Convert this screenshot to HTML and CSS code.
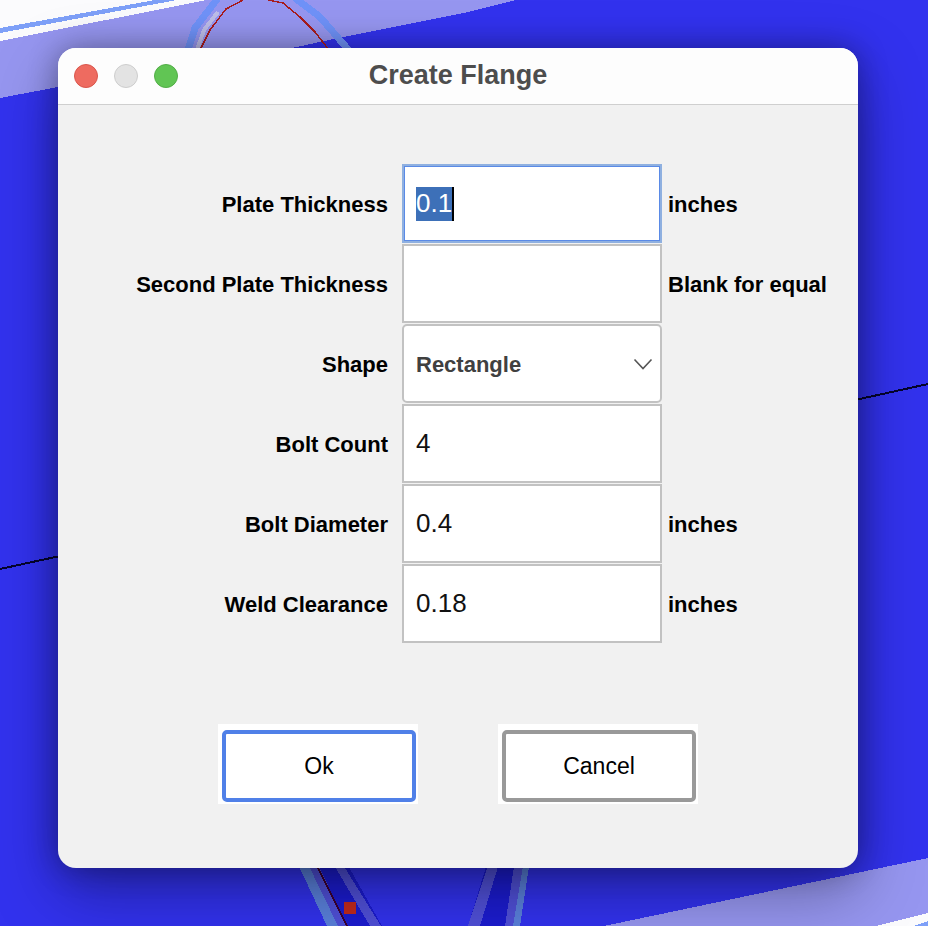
FILE: index.html
```html
<!DOCTYPE html>
<html lang="en">
<head>
<meta charset="utf-8">
<title>Create Flange</title>
<link rel="stylesheet" href="styles.css">
</head>
<body>
<svg class="scene" width="928" height="926" viewBox="0 0 928 926" aria-hidden="true">
  <rect class="s-base" width="928" height="926"/>
  <polygon class="s-lav" points="0,41 205,0 516,0 464,13 343,37 292,48 58,87 0,98"/>
  <polygon class="s-white" points="0,0 207,0 0,41"/>
  <polygon class="s-sky" points="0,28 155,0 177,0 0,33"/>
  <path class="s-ring" d="M188 50 L195 28 L218 -2"/>
  <path class="s-ring" d="M295 -2 L320 17 L352 54"/>
  <path class="s-pale" d="M197 50 L204 30 L218 12"/>
  <path class="s-red" d="M200 50 L210 30 L226 9 L243 0"/>
  <path class="s-red" d="M268 0 L283 3 L300 17 L315 32 L329 50"/>
  <polygon class="s-lav" points="604,926 928,858 928,926"/>
  <polygon class="s-white" points="876,926 928,913 928,926"/>
  <polygon class="s-sky" points="913,926 928,921 928,926"/>
  <polygon class="s-deep" points="310,860 345,860 382,926 346,926"/>
  <polygon class="s-deep" points="488,860 530,860 510,926 468,926"/>
  <polygon class="s-ringb" points="296,860 306,860 338,926 327,926"/>
  <polygon class="s-band" points="306,860 316,860 347,926 338,926"/>
  <polygon class="s-band" points="331,860 340,860 381,926 370,926"/>
  <polygon class="s-band" points="490,860 500,860 480,926 468,926"/>
  <polygon class="s-band" points="515,860 528,860 514,926 505,926"/>
  <polygon class="s-ringb" points="524,860 530,860 520,926 513,926"/>
  <path class="s-dark" d="M314 860 L347 926"/>
  <rect class="s-dot" x="344" y="902" width="12" height="12"/>
  <path class="s-line" d="M0 569 L60 556"/>
  <path class="s-line" d="M855 400 L928 384"/>
</svg>

<main class="dialog">
  <header class="titlebar">
    <div class="lights">
      <span class="light light-close"></span>
      <span class="light light-min"></span>
      <span class="light light-max"></span>
    </div>
    <h1 class="title">Create Flange</h1>
  </header>

  <div class="body">
    <div class="form">
      <div class="label">Plate Thickness</div>
      <div class="field field-focus"><span class="selection">0.1</span><span class="caret"></span></div>
      <div class="unit">inches</div>

      <div class="label">Second Plate Thickness</div>
      <div class="field"></div>
      <div class="unit">Blank for equal</div>

      <div class="label">Shape</div>
      <div class="field field-select">
        <span class="select-text">Rectangle</span>
        <svg class="chevron" width="20" height="12" viewBox="0 0 20 12"><path d="M1.5 1.5 L10 10.5 L18.5 1.5"/></svg>
      </div>
      <div class="unit"></div>

      <div class="label">Bolt Count</div>
      <div class="field">4</div>
      <div class="unit"></div>

      <div class="label">Bolt Diameter</div>
      <div class="field">0.4</div>
      <div class="unit">inches</div>

      <div class="label">Weld Clearance</div>
      <div class="field">0.18</div>
      <div class="unit">inches</div>
    </div>

    <div class="actions">
      <div class="tile"><button class="btn btn-primary" type="button">Ok</button></div>
      <div class="tile"><button class="btn" type="button">Cancel</button></div>
    </div>
  </div>
</main>
</body>
</html>
```

FILE: styles.css
```css
* { box-sizing: border-box; }

html, body {
  margin: 0;
  padding: 0;
  width: 928px;
  height: 926px;
  overflow: hidden;
}

body {
  padding: 48px 0 0 58px;
  font-family: "Liberation Sans", Arial, sans-serif;
  background: #3232ee;
}

/* Model view behind the dialog */
.scene { position: absolute; left: 0; top: 0; shape-rendering: crispEdges; }
.s-base { fill: #3232ee; }
.s-lav { fill: #9696f0; }
.s-white { fill: #fbfbfd; }
.s-sky { fill: #7ea0f8; }
.s-ring { fill: none; stroke: #6f92f8; stroke-width: 7; }
.s-pale { fill: none; stroke: #bdbde8; stroke-width: 4; }
.s-red { fill: none; stroke: #a81c1c; stroke-width: 1.5; }
.s-deep { fill: #1c1cd0; }
.s-band { fill: #5050d8; }
.s-ringb { fill: #5a80dc; }
.s-dark { fill: none; stroke: #3c0030; stroke-width: 2; }
.s-dot { fill: #c42a1c; }
.s-line { fill: none; stroke: #05052c; stroke-width: 2; }

/* Window */
.dialog {
  position: relative;
  display: flex;
  flex-direction: column;
  width: 800px;
  height: 820px;
  border-radius: 18px;
  overflow: hidden;
  background: #f1f1f1;
  box-shadow: 0 0 30px rgba(0, 0, 0, 0.32), 0 24px 64px rgba(0, 0, 0, 0.34);
}

.titlebar {
  display: grid;
  grid-template-columns: 1fr auto 1fr;
  align-items: center;
  height: 57px;
  padding: 0 16px;
  background: #fdfdfd;
  border-bottom: 1px solid #cfcfcf;
}

.lights { display: flex; gap: 16px; }

.light {
  width: 24px;
  height: 24px;
  border-radius: 50%;
  border: 1px solid;
}
.light-close { background: #ee6b60; border-color: #d9564c; }
.light-min { background: #e3e3e3; border-color: #cdcdcd; }
.light-max { background: #61c554; border-color: #52ad47; }

.title {
  margin: 0 0 2px;
  font-size: 27px;
  font-weight: 700;
  color: #4d4d4d;
}

.body {
  display: flex;
  flex-direction: column;
  flex: 1;
  padding-top: 59px;
}

/* Form rows */
.form {
  display: grid;
  grid-template-columns: 344px 260px 1fr;
  grid-auto-rows: 79px;
  row-gap: 1px;
}

.label, .unit {
  display: flex;
  align-items: center;
  padding-top: 2px;
  font-size: 22px;
  font-weight: 700;
  color: #000;
}
.label { justify-content: flex-end; padding-right: 14px; }
.unit { padding-left: 6px; }

.field {
  display: flex;
  align-items: center;
  padding-left: 12px;
  background: #fff;
  border: 2px solid #c2c2c2;
  font-size: 26px;
  color: #111;
}

.field-focus {
  border-color: #8fb0e0;
  box-shadow: inset 0 0 0 1px #5a8ae6;
}

.selection {
  display: flex;
  align-items: center;
  height: 34px;
  background: #3d70b8;
  color: #fff;
}

.caret {
  width: 2px;
  height: 34px;
  background: #000;
}

.field-select {
  justify-content: space-between;
  padding-right: 7px;
  border-radius: 5px;
}

.select-text {
  padding-top: 2px;
  font-size: 22px;
  font-weight: 700;
  color: #404040;
}

.chevron path {
  fill: none;
  stroke: #555;
  stroke-width: 1.6;
}

/* Buttons */
.actions {
  display: flex;
  justify-content: center;
  gap: 80px;
  margin-top: 81px;
}

.tile {
  width: 200px;
  height: 80px;
  padding: 6px 2px 2px 4px;
  background: #fff;
}

.btn {
  display: block;
  width: 194px;
  height: 72px;
  padding: 0;
  background: #fff;
  border: 4px solid #999;
  border-radius: 5px;
  font-family: inherit;
  font-size: 23px;
  color: #000;
}

.btn-primary { border-color: #5080e8; }
```
